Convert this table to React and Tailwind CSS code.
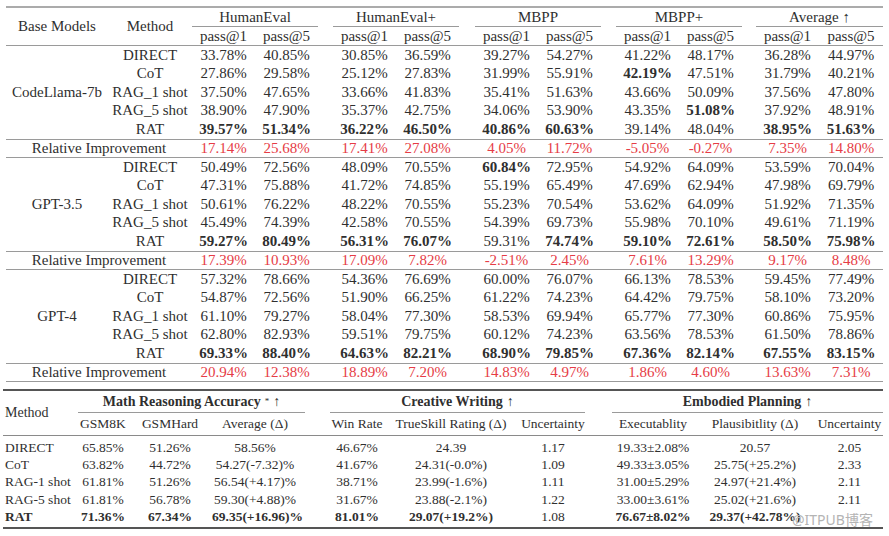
import React from "react";

const groups = ["HumanEval", "HumanEval+", "MBPP", "MBPP+", "Average ↑"];
const spacerW = ["w-[15px]", "w-[16px]", "w-[15px]", "w-[14px]"];

const blocks = [
  {
    model: "CodeLlama-7b",
    rows: [
      ["DIRECT", "33.78%", "40.85%", "30.85%", "36.59%", "39.27%", "54.27%", "41.22%", "48.17%", "36.28%", "44.97%"],
      ["CoT", "27.86%", "29.58%", "25.12%", "27.83%", "31.99%", "55.91%", "*42.19%", "47.51%", "31.79%", "40.21%"],
      ["RAG_1 shot", "37.50%", "47.65%", "33.66%", "41.83%", "35.41%", "51.63%", "43.66%", "50.09%", "37.56%", "47.80%"],
      ["RAG_5 shot", "38.90%", "47.90%", "35.37%", "42.75%", "34.06%", "53.90%", "43.35%", "*51.08%", "37.92%", "48.91%"],
      ["RAT", "*39.57%", "*51.34%", "*36.22%", "*46.50%", "*40.86%", "*60.63%", "39.14%", "48.04%", "*38.95%", "*51.63%"],
    ],
    rel: ["17.14%", "25.68%", "17.41%", "27.08%", "4.05%", "11.72%", "-5.05%", "-0.27%", "7.35%", "14.80%"],
  },
  {
    model: "GPT-3.5",
    rows: [
      ["DIRECT", "50.49%", "72.56%", "48.09%", "70.55%", "*60.84%", "72.95%", "54.92%", "64.09%", "53.59%", "70.04%"],
      ["CoT", "47.31%", "75.88%", "41.72%", "74.85%", "55.19%", "65.49%", "47.69%", "62.94%", "47.98%", "69.79%"],
      ["RAG_1 shot", "50.61%", "76.22%", "48.22%", "70.55%", "55.23%", "70.54%", "53.62%", "64.09%", "51.92%", "71.35%"],
      ["RAG_5 shot", "45.49%", "74.39%", "42.58%", "70.55%", "54.39%", "69.73%", "55.98%", "70.10%", "49.61%", "71.19%"],
      ["RAT", "*59.27%", "*80.49%", "*56.31%", "*76.07%", "59.31%", "*74.74%", "*59.10%", "*72.61%", "*58.50%", "*75.98%"],
    ],
    rel: ["17.39%", "10.93%", "17.09%", "7.82%", "-2.51%", "2.45%", "7.61%", "13.29%", "9.17%", "8.48%"],
  },
  {
    model: "GPT-4",
    rows: [
      ["DIRECT", "57.32%", "78.66%", "54.36%", "76.69%", "60.00%", "76.07%", "66.13%", "78.53%", "59.45%", "77.49%"],
      ["CoT", "54.87%", "72.56%", "51.90%", "66.25%", "61.22%", "74.23%", "64.42%", "79.75%", "58.10%", "73.20%"],
      ["RAG_1 shot", "61.10%", "79.27%", "58.04%", "77.30%", "58.53%", "69.94%", "65.77%", "77.30%", "60.86%", "75.95%"],
      ["RAG_5 shot", "62.80%", "82.93%", "59.51%", "79.75%", "60.12%", "74.23%", "63.56%", "78.53%", "61.50%", "78.86%"],
      ["RAT", "*69.33%", "*88.40%", "*64.63%", "*82.21%", "*68.90%", "*79.85%", "*67.36%", "*82.14%", "*67.55%", "*83.15%"],
    ],
    rel: ["20.94%", "12.38%", "18.89%", "7.20%", "14.83%", "4.97%", "1.86%", "4.60%", "13.63%", "7.31%"],
  },
];

function V({ v, w = "w-[63px]", red = false }) {
  const bold = v.startsWith("*");
  const t = bold ? v.slice(1) : v;
  return (
    <div
      className={`${w} shrink-0 text-center ${bold ? "font-bold" : ""} ${red ? "text-[#e63c46]" : ""}`}
    >
      {t}
    </div>
  );
}

function ValueRow({ vals, red, h = "h-[18.5px]" }) {
  const out = [];
  for (let g = 0; g < 5; g++) {
    out.push(<V key={`a${g}`} v={vals[g * 2]} red={red} />);
    out.push(<V key={`b${g}`} v={vals[g * 2 + 1]} red={red} w={g === 4 ? "w-[64px]" : "w-[63px]"} />);
    if (g < 4) out.push(<div key={`s${g}`} className={`${spacerW[g]} shrink-0`} />);
  }
  return <div className={`flex items-center ${h}`}>{out}</div>;
}

function TopTable() {
  return (
    <div className="ml-[6px] mt-[6px] w-[877px] border-t-2 border-[#ababab] text-[15px] leading-none">
      <div className="flex border-b-[1.5px] border-[#9a9a9a]">
        <div className="w-[102px] shrink-0 flex items-center justify-center">Base Models</div>
        <div className="w-[84px] shrink-0 flex items-center justify-center">Method</div>
        {groups.map((g, i) => (
          <React.Fragment key={g}>
            <div className={`${i === 4 ? "w-[127px]" : "w-[126px]"} shrink-0 flex flex-col`}>
              <div className="h-[19px] flex items-center justify-center border-b border-[#9a9a9a]">{g}</div>
              <div className="h-[18px] flex items-center">
                <div className="w-[63px] text-center">pass@1</div>
                <div className="flex-1 text-center">pass@5</div>
              </div>
            </div>
            {i < 4 && <div className={`${spacerW[i]} shrink-0`} />}
          </React.Fragment>
        ))}
      </div>
      {blocks.map((b) => (
        <React.Fragment key={b.model}>
          <div className="flex">
            <div className="w-[102px] shrink-0 flex items-center justify-center">{b.model}</div>
            <div className="flex flex-col">
              {b.rows.map((r) => (
                <div key={r[0]} className="flex items-center h-[18.5px]">
                  <div className="w-[84px] shrink-0 text-center">{r[0]}</div>
                  <ValueRow vals={r.slice(1)} />
                </div>
              ))}
            </div>
          </div>
          <div className="flex items-center h-[19.5px] border-t border-[#9a9a9a] border-b-[1.5px]">
            <div className="w-[186px] shrink-0 text-center">Relative Improvement</div>
            <ValueRow vals={b.rel} red h="h-[18px]" />
          </div>
        </React.Fragment>
      ))}
    </div>
  );
}

const bottomRows = [
  ["DIRECT", "65.85%", "51.26%", "58.56%", "46.67%", "24.39", "1.17", "19.33±2.08%", "20.57", "2.05"],
  ["CoT", "63.82%", "44.72%", "54.27(-7.32)%", "41.67%", "24.31(-0.0%)", "1.09", "49.33±3.05%", "25.75(+25.2%)", "2.33"],
  ["RAG-1 shot", "61.81%", "51.26%", "56.54(+4.17)%", "38.71%", "23.99(-1.6%)", "1.11", "31.00±5.29%", "24.97(+21.4%)", "2.11"],
  ["RAG-5 shot", "61.81%", "56.78%", "59.30(+4.88)%", "31.67%", "23.88(-2.1%)", "1.22", "33.00±3.61%", "25.02(+21.6%)", "2.11"],
  ["*RAT", "*71.36%", "*67.34%", "*69.35(+16.96)%", "*81.01%", "*29.07(+19.2%)", "1.08", "*76.67±8.02%", "*29.37(+42.78%)", ""],
];

const bw = [
  "w-[50px]",
  "w-[84px]",
  "w-[86px]",
  "w-[32px]",
  "w-[54px]",
  "w-[134px]",
  "w-[70px]",
  "w-[24px]",
  "w-[82px]",
  "w-[122px]",
  "w-[67px]",
];

function BottomTable() {
  return (
    <div className="ml-[3px] mt-[7px] w-[880px] border-t-2 border-[#555] border-b-[2.5px] text-[13.5px] leading-none">
      <div className="flex border-b border-[#8a8a8a]">
        <div className="w-[75px] shrink-0 flex items-center pl-[2px] text-[14px]">Method</div>
        <div className="flex flex-col">
          <div className="flex h-[22px] text-[14px]">
            <div className="w-[227px] shrink-0 flex items-center justify-center border-b border-[#9a9a9a] font-bold">
              Math Reasoning Accuracy
              <span className="text-[9px] ml-[4px] self-start mt-[6px] font-normal">*</span>
              <span className="ml-[4px]">↑</span>
            </div>
            <div className="w-[25px] shrink-0" />
            <div className="w-[255px] shrink-0 flex items-center justify-center border-b border-[#9a9a9a] font-bold">
              Creative Writing<span className="ml-[4px]">↑</span>
            </div>
            <div className="w-[27px] shrink-0" />
            <div className="w-[271px] shrink-0 flex items-center justify-center border-b border-[#9a9a9a] font-bold">
              Embodied Planning<span className="ml-[4px]">↑</span>
            </div>
          </div>
          <div className="flex h-[22px] items-center">
            <div className="w-[50px] shrink-0 text-center">GSM8K</div>
            <div className="w-[84px] shrink-0 text-center">GSMHard</div>
            <div className="w-[86px] shrink-0 text-center">Average (Δ)</div>
            <div className="w-[32px] shrink-0" />
            <div className="w-[54px] shrink-0 text-center">Win Rate</div>
            <div className="w-[134px] shrink-0 text-center">TrueSkill Rating (Δ)</div>
            <div className="w-[70px] shrink-0 text-center">Uncertainty</div>
            <div className="w-[24px] shrink-0" />
            <div className="w-[82px] shrink-0 text-center">Executablity</div>
            <div className="w-[122px] shrink-0 text-center">Plausibitlity (Δ)</div>
            <div className="w-[67px] shrink-0 text-center whitespace-nowrap">Uncertainty</div>
          </div>
        </div>
      </div>
      <div className="pt-[3px] pb-[2px]">
        {bottomRows.map((r) => {
          const cells = [];
          const vals = r.slice(1);
          let vi = 0;
          bw.forEach((w, i) => {
            if (i === 3 || i === 7) {
              cells.push(<div key={i} className={`${w} shrink-0`} />);
            } else {
              const v = vals[vi++];
              const bold = v.startsWith("*");
              cells.push(
                <div key={i} className={`${w} shrink-0 text-center whitespace-nowrap ${bold ? "font-bold" : ""}`}>
                  {bold ? v.slice(1) : v}
                </div>
              );
            }
          });
          const mb = r[0].startsWith("*");
          return (
            <div key={r[0]} className="flex items-center h-[17.25px]">
              <div className={`w-[75px] shrink-0 pl-[2px] whitespace-nowrap ${mb ? "font-bold" : ""}`}>
                {mb ? r[0].slice(1) : r[0]}
              </div>
              {cells}
            </div>
          );
        })}
      </div>
    </div>
  );
}

export default function App() {
  return (
    <div className="relative w-[889px] h-[536px] bg-white text-[#2f2f2f] font-['Liberation_Serif','Times_New_Roman',serif] overflow-hidden">
      <TopTable />
      <BottomTable />
      <div className="absolute left-[792px] top-[513px] text-[14px] leading-none text-[#b4b4b4] font-['Noto_Sans','Noto_Sans_CJK_SC',sans-serif] whitespace-nowrap">
        @ITPUB博客
      </div>
    </div>
  );
}
